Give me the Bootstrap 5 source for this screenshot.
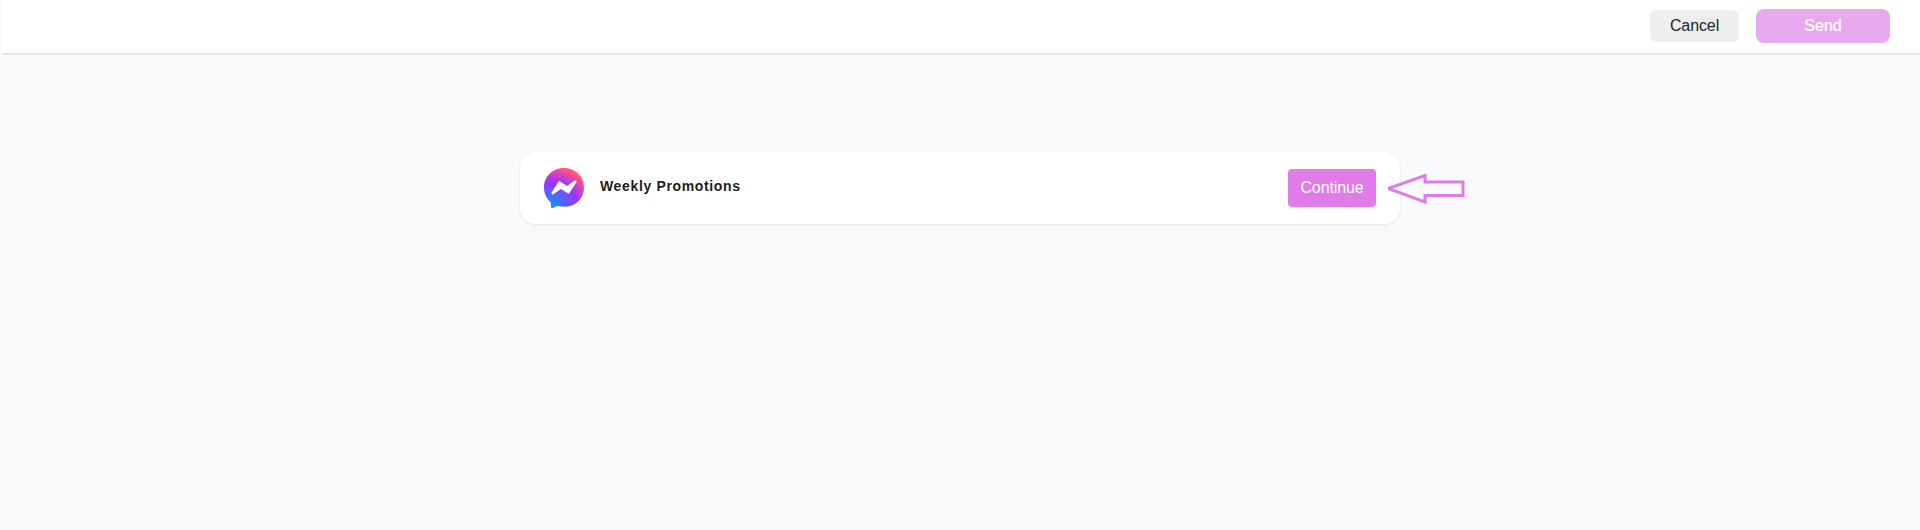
<!DOCTYPE html>
<html lang="en">
<head>
<meta charset="utf-8">
<title>Weekly Promotions</title>
<link href="https://cdn.jsdelivr.net/npm/bootstrap@5.3.0/dist/css/bootstrap.min.css" rel="stylesheet">
<style>
html, body { height: 100%; }
body { background: #f9fafc; font-family: "Liberation Sans", Arial, sans-serif; color: #212529; overflow: hidden; }
.topbar { height: 55px; margin-left: 2px; background: #fff; border-bottom: 2px solid #e6e6e8; padding: 0 30px 1px 0; gap: 17px; }
.btn-cancel { width: 89px; height: 32px; padding: 0; background: #eeeeee; border: 1px solid #f1f1f1; border-radius: 6px; font-size: 16px; letter-spacing: -.1px; color: #212529; }
.btn-send, .btn-send:disabled { width: 134px; height: 34px; padding: 0; background: #e9a9ee; border: 0; border-radius: 8px; font-size: 16px; color: #fff; opacity: 1; -webkit-text-stroke: .2px #fff; }
.stage { padding-top: 97px; }
.promo-wrap { width: 880px; }
.promo-card { height: 72px; background: #fff; border-radius: 16px; box-shadow: 0 1px 3px rgba(0,0,0,.09); padding: 0 24px; }
.promo-icon { width: 40px; height: 40px; flex: none; }
.promo-title { margin: 0 0 3px 16px; font-size: 14px; font-weight: 700; letter-spacing: .65px; color: #1c1e21; }
.btn-continue { width: 88px; height: 38px; padding: 0; background: #e07ce8; border: 0; border-radius: 4px; font-size: 16px; letter-spacing: -.1px; color: #fff; }
.btn-continue:hover { background: #d86fe0; color: #fff; }
.arrow-mark { position: absolute; left: 868px; top: 22px; width: 78px; height: 30px; }
</style>
</head>
<body>
<header class="topbar d-flex align-items-center justify-content-end">
  <button type="button" class="btn btn-cancel">Cancel</button>
  <button type="button" class="btn btn-send" disabled>Send</button>
</header>
<main class="stage d-flex justify-content-center">
  <div class="promo-wrap position-relative">
    <div class="promo-card d-flex align-items-center justify-content-between">
      <div class="d-flex align-items-center">
        <svg class="promo-icon" viewBox="0 0 24 24" aria-hidden="true">
          <defs>
            <radialGradient id="msgr" cx="0.19" cy="0.99" r="1.09">
              <stop offset="0" stop-color="#0099ff"/>
              <stop offset="0.61" stop-color="#a033ff"/>
              <stop offset="0.93" stop-color="#ff5280"/>
              <stop offset="1" stop-color="#ff7061"/>
            </radialGradient>
          </defs>
          <path fill="url(#msgr)" d="M12 0C5.24 0 0 4.952 0 11.64c0 3.499 1.434 6.521 3.769 8.61a.96.96 0 0 1 .323.683l.065 2.135a.96.96 0 0 0 1.347.85l2.381-1.053a.96.96 0 0 1 .641-.046A13 13 0 0 0 12 23.28c6.76 0 12-4.952 12-11.64S18.76 0 12 0m6.806 7.44c.522-.03.971.567.63 1.094l-4.178 6.457a.707.707 0 0 1-.977.208l-3.87-2.504a.44.44 0 0 0-.49.007l-4.363 3.01c-.637.438-1.415-.317-.995-.966l4.179-6.457a.706.706 0 0 1 .977-.21l3.87 2.505c.15.097.344.094.491-.007l4.362-3.008a.7.7 0 0 1 .364-.13"/>
        </svg>
        <span class="promo-title">Weekly Promotions</span>
      </div>
      <button type="button" class="btn btn-continue">Continue</button>
    </div>
    <svg class="arrow-mark" viewBox="0 0 78 30" aria-hidden="true">
      <path d="M0 14.5 L37 1.5 V8 H75 V21.5 H37 V28 Z" fill="none" stroke="#e07ce8" stroke-width="3"/>
    </svg>
  </div>
</main>
<script src="https://cdn.jsdelivr.net/npm/bootstrap@5.3.0/dist/js/bootstrap.bundle.min.js"></script>
</body>
</html>
